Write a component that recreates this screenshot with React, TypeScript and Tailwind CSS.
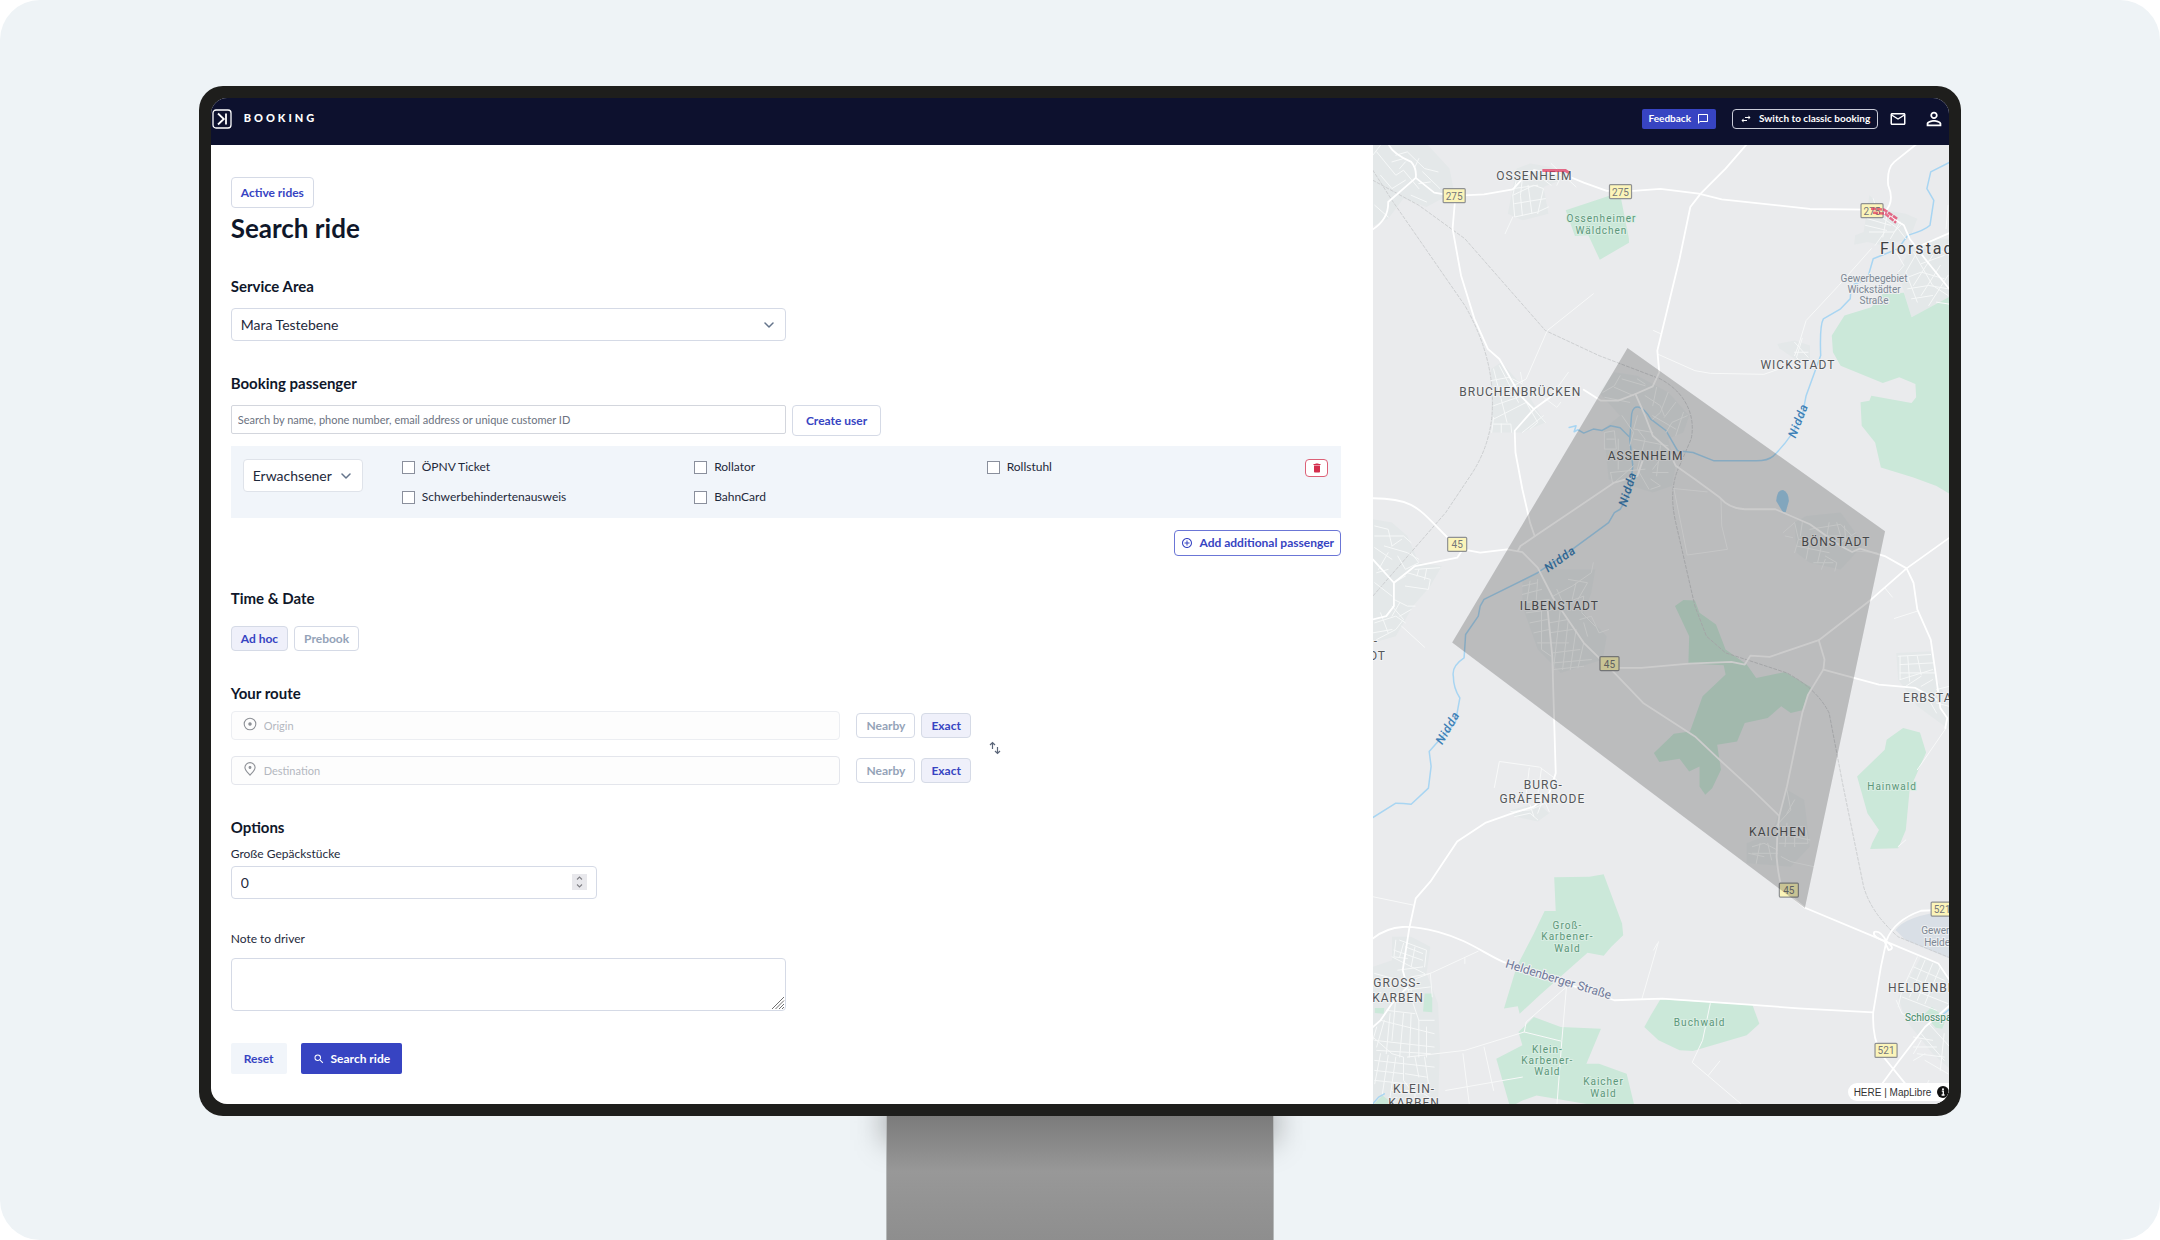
import React, { useState } from "react";
import clsx from "clsx";
import {
  MdAddCircleOutline,
  MdChatBubbleOutline,
  MdDelete,
  MdMailOutline,
  MdPersonOutline,
  MdSearch,
  MdSwapHoriz,
} from "react-icons/md";

const extras = [
  { id: "oepnv", label: "ÖPNV Ticket" },
  { id: "rollator", label: "Rollator" },
  { id: "rollstuhl", label: "Rollstuhl" },
  { id: "schwerbehindert", label: "Schwerbehindertenausweis" },
  { id: "bahncard", label: "BahnCard" },
];

const forests = [
  "M513 215L625 172L657 178L678 300L678 312L602 363L572 290L537 292Z",
  "M1520 470L1415 535L1395 462L1340 465L1310 505L1240 530L1207 590L1210 640L1230 680L1340 732L1383 715L1425 735L1427 775L1415 792L1310 770L1305 785L1282 790L1285 860L1320 910L1335 985L1420 1015L1480 1040L1520 1068Z",
  "M798 1400L820 1382L850 1383L862 1420L905 1455L930 1530L985 1575L1010 1615L1085 1597L1153 1643L1130 1712L1100 1720L1075 1700L1040 1735L980 1750L960 1805L908 1815L918 1890L895 1945L877 1965L862 1940L862 1880L835 1895L810 1857L757 1867L743 1840L795 1782L837 1775L870 1670L930 1605L925 1577L833 1572L835 1490Z",
  "M1273 1910L1345 1830L1350 1800L1393 1765L1437 1778L1453 1838L1410 1950L1400 2070L1380 2125L1307 2127L1312 2110L1330 2070L1300 2020Z",
  "M483 2212L575 2210L612 2203L660 2350L663 2385L632 2420L612 2447L570 2438L450 2560L393 2620L388 2598L352 2605L385 2480L430 2380L458 2313L487 2313Z",
  "M430 2630L500 2660L605 2665L567 2770L600 2770L672 2800L693 2900L590 2895L437 2865L400 2880L368 2900L332 2755L400 2715L390 2675Z",
  "M760 2577L1000 2594L1018 2650L985 2685L845 2732L810 2730L755 2700L718 2660L735 2625Z",
  "M1448 2622L1468 2600L1505 2635L1495 2665L1478 2662Z",
  "M145 2560L165 2560L165 2616L141 2614Z",
  "M15 2603L40 2603L38 2620L15 2618Z",
  "M15 2888L35 2865L52 2880L50 2900L15 2900Z",
];

const builtUp = [
  "M10 15L150 15L210 90L222 160L150 205L90 180L50 240L10 262Z",
  "M385 90L420 75L475 85L520 115L455 145L468 225L400 245L362 225Z",
  "M1305 170L1345 215L1400 225L1430 240L1410 300L1340 320L1300 310L1265 318L1268 290L1290 280Z",
  "M1410 330L1470 300L1520 300L1520 470L1415 535L1380 400Z",
  "M1065 615L1110 605L1150 620L1150 660L1120 668L1070 628Z",
  "M318 690L345 670L400 740L460 850L400 880L320 880Z",
  "M640 700L700 710L780 760L835 830L820 880L780 900L800 980L790 1040L740 1060L625 1020L612 870L655 830L600 760Z",
  "M10 1140L60 1150L100 1190L130 1270L190 1280L160 1340L115 1400L70 1490L10 1510Z",
  "M400 1320L470 1290L590 1290L580 1360L560 1420L620 1490L610 1560L500 1600L440 1530L400 1400Z",
  "M1110 1150L1140 1130L1230 1120L1290 1215L1230 1290L1150 1270L1115 1240Z",
  "M1375 1540L1465 1535L1480 1620L1513 1690L1513 1770L1430 1700L1380 1620Z",
  "M370 2010L440 1990L470 2020L440 2045L380 2030Z",
  "M1090 1950L1135 1980L1150 2120L1100 2180L985 2170L985 2110L1050 2080Z",
  "M60 2390L110 2390L160 2420L150 2500L180 2590L185 2720L180 2900L10 2900L10 2480L60 2460Z",
  "M1380 2570L1440 2450L1490 2470L1520 2540L1520 2790L1470 2740L1400 2640Z",
];

const roads = [
  "M10 272Q52 240 50 190L122 118L170 162L220 172L300 167L375 152L405 115L430 95L520 113L560 132L620 157L690 157L760 151L860 165L920 182L1150 211L1300 213L1345 225L1395 260L1410 300L1450 360L1520 460",
  "M50 15Q60 45 110 70Q125 90 122 118",
  "M987 15L930 90L865 165L838 205L810 360L752 635L757 700L740 742L695 765L720 830L740 890L780 930L800 980L850 1020L915 1075Q940 1108 980 1110L1060 1110L1150 1155L1230 1220L1260 1238L1280 1228L1345 1250L1402 1287L1420 1330L1430 1410L1465 1500L1480 1620L1490 1705L1508 1735L1503 1765",
  "M1430 15L1370 70Q1350 90 1354 140Q1372 190 1345 220",
  "M1440 320L1520 280",
  "M224 190L218 270L240 410L275 540L310 630L340 660L395 770L430 810L380 875L382 940L400 1050L420 1150L432 1190",
  "M430 810L490 760M560 752L605 785L650 785L695 765",
  "M10 1077C120 1077 130 1110 205 1195L245 1230L290 1240L360 1230L400 1238L440 1285L480 1375L560 1510L640 1600L715 1690L850 1790L905 1850L1000 1950L1070 2028L1065 2080L1063 2150Q1068 2220 1080 2250L1137 2303L1350 2405L1485 2470L1520 2530",
  "M388 1235L395 1220L440 1185L640 1030L700 1010L715 960",
  "M643 1585L710 1585L835 1572L945 1567L980 1575L995 1548L1045 1552L1173 1502L1310 1380L1402 1287L1520 1190",
  "M1173 1502L1188 1560L1185 1590L1145 1665L1130 1720L1090 1940L1070 2028",
  "M1185 1590L1330 1635L1425 1645L1480 1680",
  "M465 1400L478 1550L487 1900L470 1960L430 2000L375 2020L305 2048L230 2105L160 2225L122 2275L105 2365L88 2490L100 2540L60 2590L30 2640L10 2660",
  "M10 2395C60 2350 110 2355 180 2375C260 2400 300 2440 350 2465L640 2580L765 2575L1000 2594L1120 2604L1315 2616L1335 2480L1350 2400Q1370 2340 1440 2312L1520 2308",
  "M1315 2616Q1312 2690 1335 2740L1400 2832",
  "M1520 2590L1450 2660L1380 2765L1335 2835",
  "M1350 2405Q1310 2390 1318 2375Q1335 2370 1350 2405Q1375 2425 1355 2430L1345 2405",
  "M245 1230L230 1255L120 1280L65 1330L10 1260M65 1330L65 1400L45 1430L10 1440",
];

const lanes = [
  "M585 465L465 575L410 720L345 760M752 645L850 695L890 703L1030 706L1070 690M742 575L762 585",
  "M1310 330L1225 440L1140 545L1120 620L1110 650M1480 490L1520 497",
  "M795 1048L882 1058M795 1048L830 1247L935 1230L920 1160L918 1080",
  "M327 1943L340 1865L445 1882L490 1920M410 1960L418 1885M440 1965L450 1885",
  "M1430 1415L1370 1437M1345 1345L1365 1373M85 1460L145 1523",
  "M755 2405L712 2575M752 2410L742 2430M10 2270L115 2295",
  "M890 2590L870 2700L843 2766L975 2895M915 2762L885 2805",
  "M520 2535L410 2645L405 2675L250 2730L100 2750M515 2540L503 2700L490 2895M405 2675L500 2702M285 2433L165 2497L88 2530M250 2455L250 2470",
  "M245 2740L262 2895M300 2720L325 2850M200 2850L400 2810",
  "M1505 1765L1430 1890M1380 2120L1400 2100",
];

const streets = [
  "M20 40L70 110L90 95L130 150M30 110L60 150L95 125M70 50L100 40L145 90L180 100M95 70L80 90M140 100L185 150M110 170L150 190M130 60L120 85M30 20L10 50M15 200L50 235M130 135L160 130M60 70L90 60",
  "M385 120L375 170L380 235L440 220L468 205M375 170L430 140L455 150L440 225M400 120L395 170L400 230M415 140L425 225M380 195L460 180M375 150L440 140M375 235L355 285M430 100L475 140M475 75L540 145M500 115L490 140",
  "M1315 180L1330 230L1380 270L1400 300M1300 240L1360 260M1305 280L1370 280L1390 255M1320 320L1345 280M1350 235L1340 295M1385 250L1360 300M1295 260L1350 275",
  "M1420 340L1470 440L1510 470M1440 320L1400 400L1430 490M1470 350L1420 440M1490 380L1440 470M1510 410L1460 500M1395 420L1440 400L1500 420M1405 450L1460 440L1510 450M1415 480L1470 470M1440 375L1500 350M1370 330L1395 380L1380 400M1480 330L1515 350M1510 200L1505 270",
  "M1110 610L1145 655M1130 598L1115 655L1125 670M1110 640L1145 640",
  "M325 690L360 850M340 680L390 790M318 725L365 715M320 760L380 740M325 800L400 770M325 840L410 790M325 835L320 880M325 855L370 855L372 880M345 855L345 880M400 730L395 700M430 810L460 850M410 790L440 850L420 870M400 880L455 830M450 770L490 805L500 790M470 780L520 700M375 720L400 735",
  "M655 710L640 740L610 760M660 720L720 740M640 745L690 770M615 775L680 790M700 720L720 735M720 770L760 800L770 830M750 745L740 800M780 760L760 820L740 840M800 790L770 835M830 830L790 850L775 880M820 820L800 890M740 830L800 870M660 830L690 880L680 920M700 830L690 870L740 880M615 880L640 875L645 930L615 930ZM620 900L640 900M650 900L650 990M690 900L780 920M690 930L760 960L740 990M700 870L720 900L700 990L730 1050M630 1000L720 990M640 1030L690 980M740 1000L780 1000M735 1020L760 1040L735 1050M760 920L750 1010M630 1000L635 1030",
  "M15 1160L50 1170L60 1220M15 1190L90 1190L110 1210M40 1220L100 1240L130 1260M60 1220L85 1200M15 1225L60 1260M75 1250L95 1290L130 1270L110 1240M120 1290L185 1285M100 1300L160 1320L155 1350L95 1340M50 1240L25 1290M20 1300L50 1290M65 1330L95 1310M15 1330L60 1370M65 1380L100 1400L120 1400M60 1400L90 1440L70 1470L20 1500M30 1420L50 1480M15 1450L70 1430L95 1450M10 1480L60 1470M80 1390L60 1430M110 1410L80 1430M150 1290L145 1320M130 1290L125 1310",
  "M400 1340L440 1330M400 1365L450 1350M400 1390L470 1380M410 1420L480 1410M420 1325L410 1400M440 1320L435 1400M420 1450L465 1440M430 1480L470 1470M440 1510L520 1510M480 1540L550 1530M480 1570L580 1560M500 1400L480 1600M520 1440L505 1590M540 1470L525 1590M560 1510L545 1585M470 1480L530 1470M470 1450L520 1440M480 1370L530 1340L580 1300L585 1270M520 1320L570 1330L545 1380M490 1400L560 1370L555 1420L590 1460M550 1440L580 1430L600 1480L625 1470M540 1330L530 1380M560 1450L570 1490M490 1350L510 1400M480 1590L560 1580M450 1400L450 1530L475 1550",
  "M1110 1150L1120 1200L1110 1240M1130 1150L1125 1190M1080 1180L1110 1150M1085 1190L1105 1195M1120 1200L1200 1210M1115 1220L1200 1240M1150 1170L1230 1155L1260 1190M1200 1150L1190 1220M1220 1150L1230 1190L1190 1190M1240 1160L1245 1220M1150 1200L1140 1260M1180 1220L1170 1270M1190 1250L1220 1270L1215 1295M1160 1270L1210 1270M1190 1260L1180 1290M1230 1210L1270 1180M1270 1235L1325 1240",
  "M1380 1550L1465 1545M1385 1575L1470 1570M1385 1600L1475 1600M1385 1550L1385 1620M1405 1550L1410 1625M1430 1550L1440 1605M1385 1620L1470 1590M1400 1640L1440 1610M1440 1640L1470 1620M1480 1650L1513 1640M1480 1690L1513 1700M1450 1660L1480 1720",
  "M370 2015L420 2010L460 1990L470 2015M380 2030L420 2020L440 2040M420 1995L430 2030M450 1990L440 2020",
  "M1090 1950L1100 2010L1060 2060M1110 1980L1090 2020M1065 2060L1130 2060M1065 2080L1150 2100M1090 2050L1085 2120M1110 2060L1110 2120M1140 2070L1145 2110L1070 2110M1065 2140L1000 2140M1065 2130L1030 2110L1000 2120M1020 2110L1010 2170M1040 2110L1050 2160M990 2140L1030 2150M1075 2150L1100 2165L1160 2180",
  "M70 2400L65 2450L100 2455M80 2400L150 2430L145 2480M95 2420L140 2440M65 2430L140 2460M90 2410L80 2450M120 2420L110 2480M60 2450L145 2500M75 2490L140 2480",
  "M15 2500L80 2520M15 2530L70 2520M110 2510L160 2500L165 2570M90 2550L160 2540M100 2540L130 2640L170 2640M110 2520L110 2580M70 2570L60 2700M45 2610L120 2620M30 2640L170 2680M20 2660L10 2700M40 2640L20 2720M55 2620L45 2740M90 2620L80 2750M110 2620L105 2750M130 2640L130 2750M150 2660L150 2750M15 2700L170 2720M20 2730L160 2740M10 2690L60 2740L90 2750L90 2820L110 2850M15 2760L90 2770M15 2790L90 2800M30 2740L15 2830M50 2745L35 2860M70 2750L55 2870M90 2770L170 2780M95 2800L150 2810M120 2750L130 2810M145 2750L155 2830M15 2820L100 2830M60 2850L110 2850M130 2850L170 2880M120 2850L120 2890",
  "M1430 2450L1390 2550L1380 2600M1450 2460L1410 2570M1470 2470L1430 2580M1490 2480L1450 2590M1420 2480L1500 2520M1410 2510L1490 2550M1400 2540L1510 2590M1390 2570L1480 2610M1375 2580L1390 2620L1440 2640M1480 2530L1515 2540M1460 2650L1515 2720M1440 2680L1500 2760M1420 2690L1470 2700M1420 2720L1480 2720M1430 2740L1500 2750M1450 2760L1510 2800M1500 2680L1490 2790M1440 2700L1420 2740M1420 2760L1450 2740M1460 2820L1440 2870",
];

const rivers = [
  "M1520 68L1465 100L1455 150L1473 185L1463 260Q1450 275 1405 290L1380 330L1315 360L1300 420L1258 440L1255 480L1230 510L1185 540Q1175 560 1178 650L1140 770L1130 830Q1100 900 1055 950Q1040 965 1010 965L900 965L845 940L805 935L775 875L735 840C715 800 690 790 685 825L680 900L688 980L680 1060L655 1110L640 1120L625 1150L530 1230L440 1300L300 1380L290 1400L285 1430L252 1485L248 1555Q215 1580 220 1610Q220 1645 237 1675L225 1750L180 1805L157 1835L162 1880L155 1945L110 1993Q90 1990 70 1990L10 2033",
  "M522 865L540 860L535 878L545 872L560 882L585 870L608 874L630 860L655 866L678 892",
  "M1495 2625L1520 2600",
  "M10 2890L25 2870L40 2860",
];

const railways = [
  "M10 95L60 185L250 500Q320 640 322 780Q325 900 270 1000L200 1120L10 1370",
  "M10 125L130 200L250 300L460 575L600 650L760 720C840 770 850 850 840 900L810 980Q780 1050 800 1150L850 1400L880 1490L930 1540L1090 1600Q1170 1650 1200 1720L1235 1930L1290 2240Q1310 2320 1380 2390L1520 2455",
];

type MapLabel = {
  text: string;
  x: number;
  y: number;
  anchor?: "start" | "middle" | "end";
};

const towns: MapLabel[] = [
  { text: "OSSENHEIM", x: 161, y: 36 },
  { text: "WICKSTADT", x: 424, y: 225 },
  { text: "BRUCHENBRÜCKEN", x: 147, y: 252 },
  { text: "ASSENHEIM", x: 272, y: 316 },
  { text: "BÖNSTADT", x: 462, y: 402 },
  { text: "ILBENSTADT", x: 186, y: 466 },
  { text: "ERBSTADT", x: 529, y: 557, anchor: "start" },
  { text: "-", x: 3, y: 500 },
  { text: "DT", x: 13, y: 515, anchor: "end" },
  { text: "BURG-", x: 170, y: 644 },
  { text: "GRÄFENRODE", x: 169, y: 658 },
  { text: "KAICHEN", x: 404, y: 691 },
  { text: "GROSS-", x: 24, y: 842 },
  { text: "KARBEN", x: 25, y: 857 },
  { text: "HELDENBERGEN", x: 514, y: 847, anchor: "start" },
  { text: "KLEIN-", x: 41, y: 948 },
  { text: "KARBEN", x: 41, y: 962 },
];

const woods: MapLabel[] = [
  { text: "Ossenheimer", x: 228, y: 78 },
  { text: "Wäldchen", x: 228, y: 90 },
  { text: "Hainwald", x: 518, y: 645 },
  { text: "Groß-", x: 194, y: 784 },
  { text: "Karbener-", x: 194, y: 795 },
  { text: "Wald", x: 194, y: 807 },
  { text: "Buchwald", x: 326, y: 881 },
  { text: "Klein-", x: 174, y: 908 },
  { text: "Karbener-", x: 174, y: 919 },
  { text: "Wald", x: 174, y: 930 },
  { text: "Kaicher", x: 230, y: 940 },
  { text: "Wald", x: 230, y: 952 },
];

const districts: MapLabel[] = [
  { text: "Gewerbegebiet", x: 500, y: 138 },
  { text: "Wickstädter", x: 500, y: 149 },
  { text: "Straße", x: 500, y: 160 },
  { text: "Gewerbegebiet", x: 547, y: 789, anchor: "start" },
  { text: "Heldenbergen", x: 550, y: 801, anchor: "start" },
];

const parks: MapLabel[] = [
  { text: "Schlosspark", x: 531, y: 876, anchor: "start" },
];

const shields = [
  { text: "275", x: 81, y: 52, w: 22 },
  { text: "275", x: 247, y: 48, w: 22 },
  { text: "275", x: 498, y: 67, w: 22 },
  { text: "45", x: 84, y: 400, w: 19 },
  { text: "45", x: 236, y: 519, w: 19 },
  { text: "45", x: 415, y: 745, w: 19 },
  { text: "521", x: 568, y: 764, w: 22 },
  { text: "521", x: 512, y: 905, w: 22 },
];

const riverLabels = [
  { x: 428, y: 278, angle: -69 },
  { x: 258, y: 346, angle: -73 },
  { x: 189, y: 418, angle: -36 },
  { x: 78, y: 585, angle: -60 },
];

const heading = "text-[15px] leading-5 font-bold text-[#0f172a]";

const Lines: React.FC<{ paths: string[]; className: string }> = ({
  paths,
  className,
}) => (
  <g className={className} strokeLinejoin="round" strokeLinecap="round">
    {paths.map((d) => (
      <path key={d} d={d} vectorEffect="non-scaling-stroke" />
    ))}
  </g>
);

const Labels: React.FC<{ items: MapLabel[]; className: string }> = ({
  items,
  className,
}) => (
  <g className={className} strokeWidth="2" paintOrder="stroke">
    {items.map((item) => (
      <text
        key={`${item.text}-${item.x}-${item.y}`}
        x={item.x}
        y={item.y}
        textAnchor={item.anchor ?? "middle"}
      >
        {item.text}
      </text>
    ))}
  </g>
);

const ServiceMap: React.FC = () => (
  <svg
    viewBox="0 0 575 960"
    preserveAspectRatio="xMidYMid slice"
    className="absolute inset-0 h-full w-full font-['Roboto',sans-serif]"
    role="img"
    aria-label="Service area map"
  >
    <rect width="575" height="960" fill="#eaebed" />
    {/* Terrain is drawn on a finer survey grid than the labels */}
    <g transform="translate(-4 -5) scale(0.38265 0.33333)">
      <Lines paths={builtUp} className="fill-[#e4e8e9]" />
      <path d="M1373 2370Q1400 2325 1520 2310V2458L1400 2400Z" fill="#d9dfe6" />
      <Lines paths={forests} className="fill-[#cbe8d9]" />
      <Lines
        paths={railways}
        className="fill-none stroke-[#cdcfd1] stroke-1 [stroke-dasharray:3_2]"
      />
      <Lines
        paths={rivers}
        className="fill-none stroke-[#a8d5f2] stroke-[1.5px]"
      />
      <path
        d="M1062 1085Q1064 1052 1080 1052Q1094 1058 1095 1085L1087 1118L1080 1120Z"
        fill="#a3d0ed"
      />
      <Lines paths={streets} className="fill-none stroke-[#f6f8f8] stroke-1" />
      <Lines paths={lanes} className="fill-none stroke-[#f8f9f9] stroke-1" />
      <Lines paths={roads} className="fill-none stroke-white stroke-[1.8px]" />
    </g>

    <Labels
      items={towns}
      className="fill-[#55575a] stroke-[#f1f2f3] text-[12px] tracking-[1px]"
    />
    <Labels
      items={woods}
      className="fill-[#5c977a] stroke-[#d9eee3] text-[10px] tracking-[1px]"
    />
    <Labels
      items={districts}
      className="fill-[#7d8794] stroke-[#eef0f1] text-[10px]"
    />
    <Labels
      items={parks}
      className="fill-[#3f8a66] stroke-[#eef0f1] text-[10px]"
    />
    <text
      x="506"
      y="110"
      paintOrder="stroke"
      strokeWidth="2"
      className="fill-[#3f4144] stroke-[#f1f2f3] text-[16px] tracking-[2px]"
    >
      Florstadt
    </text>
    <text
      transform="translate(184 838) rotate(17)"
      textAnchor="middle"
      paintOrder="stroke"
      strokeWidth="2"
      className="fill-[#6f7899] stroke-[#f1f2f3] text-[12px]"
    >
      Heldenberger Straße
    </text>
    {riverLabels.map((label) => (
      <text
        key={label.y}
        transform={`translate(${label.x} ${label.y}) rotate(${label.angle})`}
        textAnchor="middle"
        className="fill-[#3d7fb5] text-[12px] font-medium tracking-[1px] italic"
      >
        Nidda
      </text>
    ))}
    {shields.map((shield) => (
      <g
        key={`${shield.x}-${shield.y}`}
        transform={`translate(${shield.x} ${shield.y})`}
      >
        <rect
          x={-shield.w / 2}
          y="-7"
          width={shield.w}
          height="14"
          rx="1"
          fill="#fbf4b9"
          stroke="#8f9193"
          strokeWidth="1.2"
        />
        <text
          y="4"
          textAnchor="middle"
          className="fill-[#75777a] text-[10px]"
        >
          {shield.text}
        </text>
      </g>
    ))}

    {/* Traffic incidents */}
    <g fill="none" stroke="#e0305a" strokeOpacity=".7">
      <path d="M169 27H192L195 29" strokeWidth="3" />
      <path
        d="M497 65L510 66L523 75M499 69L511 70L522 79"
        strokeWidth="2.5"
        strokeDasharray="5 1"
      />
    </g>

    {/* Bookable zone */}
    <path d="M254 204L511 387L431 763L79 498Z" fill="#000" fillOpacity=".2" />
  </svg>
);

const Chevron: React.FC = () => (
  <svg
    viewBox="0 0 10 6"
    className="pointer-events-none absolute top-1/2 right-3 h-1.5 w-2.5 -translate-y-1/2"
    fill="none"
    stroke="#64748b"
    strokeWidth="1.5"
  >
    <path d="M1 1L5 5L9 1" strokeLinecap="round" strokeLinejoin="round" />
  </svg>
);

type SegmentProps = {
  options: string[];
  value: string;
  onChange: (value: string) => void;
};

const Segment: React.FC<SegmentProps> = ({ options, value, onChange }) => (
  <div className="flex gap-[6px]">
    {options.map((option) => (
      <button
        key={option}
        type="button"
        aria-pressed={option === value}
        onClick={() => onChange(option)}
        className={clsx(
          "h-[25px] rounded-sm border border-[#d5dae6] px-[9px] text-[12px] font-bold",
          option === value
            ? "bg-[#eff0fa] text-[#3744c2]"
            : "bg-white text-[#94a3b8]"
        )}
      >
        {option}
      </button>
    ))}
  </div>
);

const Header: React.FC = () => (
  <header className="flex h-[47px] items-center justify-between bg-[#0d112e] pr-1 pl-px text-white">
    <div className="flex items-center gap-3 pb-1.5">
      <svg viewBox="0 0 20 20" className="h-5 w-5" fill="none" stroke="white">
        <rect x="1" y="1" width="18" height="18" rx="3" strokeWidth="1.3" />
        <path d="M14 4.5V15.5" strokeWidth="1.8" />
        <path d="M6 4.5L11.800 10L6 15.500" strokeWidth="1.8" />
      </svg>
      <span className="text-[11px] font-black tracking-[3px]">BOOKING</span>
    </div>
    <div className="flex items-center pb-1.5">
      <button
        type="button"
        className="flex h-5 items-center gap-[6px] rounded-xs bg-[#3744c2] px-[7px] text-[10px] font-bold"
      >
        Feedback
        <MdChatBubbleOutline className="h-3 w-3" />
      </button>
      <button
        type="button"
        className="ml-4 flex h-5 items-center gap-[7px] rounded-sm border border-[#c9ccd8] px-[7px] text-[10px] font-bold"
      >
        <MdSwapHoriz className="h-3 w-3" />
        Switch to classic booking
      </button>
      <button type="button" aria-label="Messages" className="ml-[11px]">
        <MdMailOutline className="h-[18px] w-[18px]" />
      </button>
      <button type="button" aria-label="Account" className="ml-4">
        <MdPersonOutline className="h-[22px] w-[22px]" />
      </button>
    </div>
  </header>
);

const App: React.FC = () => {
  const [timing, setTiming] = useState("Ad hoc");
  const [originMode, setOriginMode] = useState("Exact");
  const [destinationMode, setDestinationMode] = useState("Exact");
  const [luggage, setLuggage] = useState(0);

  return (
    <div className="flex min-h-screen flex-col items-center overflow-hidden rounded-[40px] bg-[#eef3f6] px-[9.2%] pt-[86px] font-['Lato',sans-serif] text-[#1e293b]">
      <div className="relative z-10 w-full rounded-3xl bg-[#1e1e1c] p-3">
        <div className="overflow-hidden rounded-2xl bg-white">
          <Header />
          <div className="grid grid-cols-[1162fr_576fr]">
            <form
              className="flex flex-col gap-8 pt-8 pr-8 pb-[30px] pl-5"
              onSubmit={(e) => e.preventDefault()}
            >
              <div>
                <button
                  type="button"
                  className="h-[31px] rounded-sm border border-[#d5dae6] px-[9px] text-[12px] font-bold text-[#3744c2]"
                >
                  Active rides
                </button>
                <h1 className="mt-1 text-[26px] leading-8 font-bold text-[#0f172a]">
                  Search ride
                </h1>
              </div>

              <section>
                <h2 className={heading}>
                  <label htmlFor="service-area">Service Area</label>
                </h2>
                <div className="relative mt-3 w-1/2">
                  <select
                    id="service-area"
                    className="h-[33px] w-full appearance-none rounded-sm border border-[#d5dae6] bg-white px-[9px] text-[14px]"
                  >
                    <option>Mara Testebene</option>
                  </select>
                  <Chevron />
                </div>
              </section>

              {/* Passengers */}
              <section>
                <h2 className={heading}>
                  <label htmlFor="passenger-search">Booking passenger</label>
                </h2>
                <div className="mt-3 flex items-start gap-[6px]">
                  <input
                    id="passenger-search"
                    type="text"
                    placeholder="Search by name, phone number, email address or unique customer ID"
                    className="h-[29px] w-1/2 rounded-xs border border-[#d3d6dd] px-[6px] text-[11px] placeholder:text-[#6b7280]"
                  />
                  <button
                    type="button"
                    className="h-[31px] rounded-sm border border-[#d5dae6] px-[13px] text-[12px] font-bold text-[#3744c2]"
                  >
                    Create user
                  </button>
                </div>
                <div className="mt-[10px] flex items-start bg-[#f1f5fa] px-3 py-[13px]">
                  <div className="relative w-[120px]">
                    <select
                      aria-label="Passenger type"
                      className="h-[33px] w-full appearance-none rounded-sm border border-[#dfe3ea] bg-white px-[9px] text-[14px]"
                    >
                      <option>Erwachsener</option>
                    </select>
                    <Chevron />
                  </div>
                  <div className="ml-[39px] grid flex-1 grid-cols-3 gap-y-[14px] pr-[26px]">
                    {extras.map((extra) => (
                      <div
                        key={extra.id}
                        className="flex items-center gap-[7px]"
                      >
                        <input
                          id={extra.id}
                          type="checkbox"
                          className="h-[13px] w-[13px] appearance-none border border-[#8a8f9c] bg-white checked:bg-[#3744c2]"
                        />
                        <label
                          htmlFor={extra.id}
                          className="text-[12px] leading-4"
                        >
                          {extra.label}
                        </label>
                      </div>
                    ))}
                  </div>
                  <button
                    type="button"
                    aria-label="Remove passenger"
                    className="mr-px flex h-[18px] w-[23px] items-center justify-center rounded-sm border border-[#dc6177] bg-white text-[#d42d4c]"
                  >
                    <MdDelete className="h-3 w-3" />
                  </button>
                </div>
                <div className="mt-3 flex justify-end">
                  <button
                    type="button"
                    className="flex h-[26px] items-center gap-[6px] rounded-sm border border-[#6b76d6] px-[6px] text-[12px] font-bold text-[#3744c2]"
                  >
                    <MdAddCircleOutline className="h-3 w-3" />
                    Add additional passenger
                  </button>
                </div>
              </section>

              <section>
                <h2 className={heading}>Time &amp; Date</h2>
                <div className="mt-[18px]">
                  <Segment
                    options={["Ad hoc", "Prebook"]}
                    value={timing}
                    onChange={setTiming}
                  />
                </div>
              </section>

              {/* Route */}
              <section>
                <h2 className={heading}>Your route</h2>
                <div className="mt-2 flex items-center gap-[18px]">
                  <div className="flex w-2/3 flex-col gap-4">
                    <div className="flex items-center gap-4">
                      <div className="relative flex-1">
                        <svg
                          viewBox="0 0 14 14"
                          className="absolute top-[6px] left-3 h-[14px] w-[14px]"
                          fill="none"
                          stroke="#8e9197"
                          strokeWidth="1.1"
                        >
                          <circle cx="7" cy="7" r="5.8" />
                          <circle cx="7" cy="7" r="1.2" fill="#8e9197" />
                        </svg>
                        <input
                          type="text"
                          aria-label="Origin"
                          placeholder="Origin"
                          className="block h-[29px] w-full rounded-sm border border-[#eceef2] bg-[#fdfdfd] pr-3 pl-8 text-[11px] placeholder:text-[#b4b8c0]"
                        />
                      </div>
                      <Segment
                        options={["Nearby", "Exact"]}
                        value={originMode}
                        onChange={setOriginMode}
                      />
                    </div>
                    <div className="flex items-center gap-4">
                      <div className="relative flex-1">
                        <svg
                          viewBox="0 0 14 14"
                          className="absolute top-[6px] left-3 h-[14px] w-[14px]"
                          fill="none"
                          stroke="#8e9197"
                          strokeWidth="1.1"
                        >
                          <path d="M7 13.2C4.5 10.4 1.9 8 1.9 5.5A5.1 4.9 0 0 1 12.1 5.5C12.1 8 9.500 10.400 7 13.200Z" />
                          <circle cx="7" cy="5.5" r=".9" fill="#8e9197" />
                        </svg>
                        <input
                          type="text"
                          aria-label="Destination"
                          placeholder="Destination"
                          className="block h-[29px] w-full rounded-sm border border-[#e4e6ec] bg-[#fdfdfd] pr-3 pl-8 text-[11px] placeholder:text-[#b4b8c0]"
                        />
                      </div>
                      <Segment
                        options={["Nearby", "Exact"]}
                        value={destinationMode}
                        onChange={setDestinationMode}
                      />
                    </div>
                  </div>
                  <button type="button" aria-label="Swap origin and destination">
                    <svg
                      viewBox="0 0 12 14"
                      className="h-[14px] w-3"
                      fill="none"
                      stroke="#5b6679"
                      strokeWidth="1.2"
                    >
                      <path d="M3.500 8V1.500M1 4L3.500 1.500L6 4" />
                      <path d="M8.500 6V12.500M6 10L8.500 12.500L11 10" />
                    </svg>
                  </button>
                </div>
              </section>

              <section>
                <h2 className={heading}>Options</h2>
                <label
                  htmlFor="luggage"
                  className="mt-[9px] block text-[12px] leading-4"
                >
                  Große Gepäckstücke
                </label>
                <div className="relative mt-1 w-[33%]">
                  <input
                    id="luggage"
                    type="number"
                    min={0}
                    value={luggage}
                    onChange={(e) => setLuggage(Number(e.target.value))}
                    className="block h-[33px] w-full [appearance:textfield] rounded-sm border border-[#d5dae6] px-[9px] text-[14px] [&::-webkit-inner-spin-button]:appearance-none"
                  />
                  <svg
                    viewBox="0 0 15 16"
                    className="pointer-events-none absolute top-2 right-[10px] h-4 w-[15px]"
                    fill="none"
                    stroke="#808086"
                    strokeWidth="1.1"
                  >
                    <rect width="15" height="16" fill="#e8e8ec" stroke="none" />
                    <path d="M5 5.500L7.500 3L10 5.500M5 10.500L7.500 13L10 10.500" />
                  </svg>
                </div>
              </section>

              <section>
                <label htmlFor="note" className="block text-[12px] leading-4">
                  Note to driver
                </label>
                <div className="relative mt-[11px] w-1/2">
                  <textarea
                    id="note"
                    className="block h-[53px] w-full resize-none rounded-sm border border-[#d5dae6] px-[9px] py-1 text-[14px]"
                  />
                  <svg
                    viewBox="0 0 14 14"
                    className="pointer-events-none absolute right-px bottom-px h-[14px] w-[14px]"
                    stroke="#6f6f6f"
                    strokeWidth="1"
                  >
                    <path d="M1 13L13 1M4.500 13L13 4.500M8 13L13 8M11 13L13 11" />
                  </svg>
                </div>
              </section>

              <div className="flex gap-[14px]">
                <button
                  type="reset"
                  className="h-[31px] rounded-xs bg-[#f1f5fa] px-[13px] text-[12px] font-bold text-[#3744c2]"
                >
                  Reset
                </button>
                <button
                  type="submit"
                  className="flex h-[31px] items-center gap-[6px] rounded-xs bg-[#3744c2] px-3 text-[12px] font-bold text-white"
                >
                  <MdSearch className="h-3 w-3" />
                  Search ride
                </button>
              </div>
            </form>

            <div className="relative overflow-hidden">
              <ServiceMap />
              <div className="absolute right-0 bottom-[3px] flex h-[18px] items-center gap-[6px] rounded-l-full bg-white pl-[6px] font-['Liberation_Sans',sans-serif] text-[10px] text-[#333]">
                <span>
                  <a href="#here">HERE</a> | <a href="#maplibre">MapLibre</a>
                </span>
                <svg viewBox="0 0 12 12" className="h-3 w-3">
                  <circle cx="6" cy="6" r="6" fill="#111" />
                  <circle cx="6" cy="3.2" r="1" fill="#fff" />
                  <path
                    d="M4.800 5.200H6.300V8.800M4.600 9H7.600"
                    fill="none"
                    stroke="#fff"
                    strokeWidth="1.300"
                  />
                </svg>
              </div>
            </div>
          </div>
        </div>
      </div>

      {/* Stand */}
      <div className="relative flex w-[388px] flex-1 flex-col">
        <div className="absolute inset-x-0 -top-3 h-9 bg-black/40 blur-lg" />
        <div className="relative flex-1 border-x border-[#b5b8b9] bg-linear-to-b from-[#7b7b7b] via-[#989898] via-45% to-[#8e8e8e]" />
      </div>
    </div>
  );
};

export default App;
